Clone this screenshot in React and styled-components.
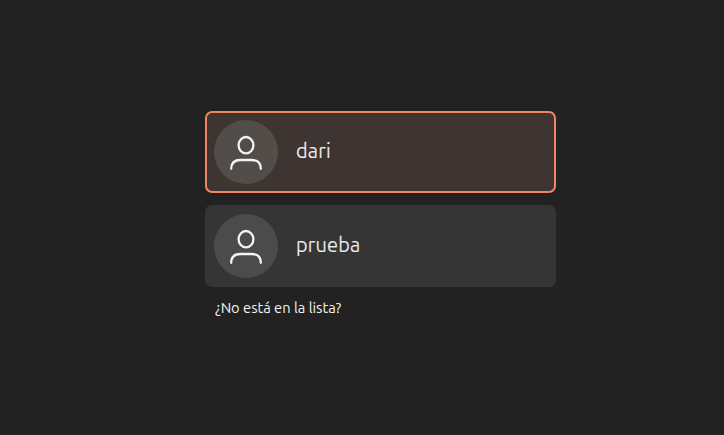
import React from "react";
import styled, { createGlobalStyle } from "styled-components";

const GlobalStyle = createGlobalStyle`
  * { box-sizing: border-box; }
  body {
    margin: 0;
    background: #222222;
    font-family: Ubuntu, "Noto Sans", sans-serif;
    color: #f2f2f2;
  }
`;

const Screen = styled.main`
  height: 435px;
  padding: 111px 0 0 205px;
  background: #222222;
  border-bottom: 1px solid #2a2329;
  overflow: hidden;
`;

const UserList = styled.div`
  display: flex;
  flex-direction: column;
  gap: 12px;
  width: 351px;
`;

const UserCard = styled.button`
  display: flex;
  align-items: center;
  gap: 18px;
  width: 100%;
  height: 82px;
  padding: 0 7px;
  border: 2px solid ${(p) => (p.$selected ? "#f18760" : "#353535")};
  border-radius: 7px;
  background: ${(p) => (p.$selected ? "#3e3533" : "#353535")};
  color: inherit;
  font: inherit;
  text-align: left;
`;

const Avatar = styled.span`
  display: flex;
  width: 64px;
  height: 64px;
  border-radius: 50%;
  background: ${(p) => (p.$selected ? "#534d49" : "#4b4b4b")};
`;

const UserName = styled.span`
  font-size: 20px;
  font-weight: 300;
  line-height: 28px;
  letter-spacing: 0.25px;
  margin-top: -3px;
  -webkit-text-stroke: 0.2px currentColor;
`;

const NotListed = styled.button`
  display: block;
  margin: 11px 0 0 10px;
  padding: 0;
  border: 0;
  background: none;
  color: inherit;
  font-family: inherit;
  font-size: 14.667px;
  line-height: 20px;
  white-space: nowrap;
`;

function PersonIcon() {
  return (
    <svg width="64" height="64" viewBox="0 0 64 64" fill="none" stroke="#f4f4f2" strokeWidth="2.3" strokeLinecap="round">
      <ellipse cx="32" cy="25.2" rx="7.4" ry="8.2" />
      <path d="M17.2 48.8C17.2 42.6 20.8 40 26.5 40H37.5C43.2 40 46.8 42.6 46.8 48.8" />
    </svg>
  );
}

const users = [
  { name: "dari", selected: true },
  { name: "prueba", selected: false },
];

export default function App() {
  return (
    <>
      <GlobalStyle />
      <Screen>
        <UserList>
          {users.map((user) => (
            <UserCard key={user.name} $selected={user.selected}>
              <Avatar $selected={user.selected}>
                <PersonIcon />
              </Avatar>
              <UserName>{user.name}</UserName>
            </UserCard>
          ))}
        </UserList>
        <NotListed>¿No está en la lista?</NotListed>
      </Screen>
    </>
  );
}
